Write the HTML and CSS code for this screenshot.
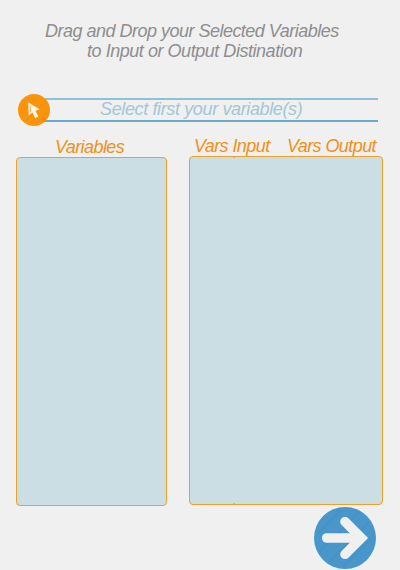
FILE: index.html
```html
<!DOCTYPE html>
<html lang="en">
<head>
<meta charset="utf-8">
<title>Variable selection</title>
<link rel="stylesheet" href="styles.css">
</head>
<body>
<main class="screen">
  <h1 class="title"><span class="title-first">Drag and Drop your Selected Variables</span><span class="title-second">to Input or Output Distination</span></h1>
  <div class="step">
    <svg class="step-icon" viewBox="0 0 32 32">
      <circle cx="16" cy="16" r="16" fill="#f8950d"/>
      <path d="M4 18 18 4M8 27 28 7M18 30 30 18" stroke="#e98c12" stroke-width="1.2" opacity=".45"/>
      <path d="M10.3 8.3 21.6 15.2 17.6 17 20.4 22.6 17.2 24.2 14.4 18.6 10.6 21.6Z" fill="#fff4e2"/>
      <path d="M12.3 12V18.4" stroke="#f8a63a" stroke-width="1"/>
    </svg>
    <div class="step-text"><span>Select first your variable(s)</span></div>
  </div>
  <div class="columns">
    <section class="source">
      <h2 class="label label-source">Variables</h2>
      <div class="panel"></div>
    </section>
    <section class="target">
      <div class="labels"><h2 class="label label-input">Vars Input</h2><h2 class="label label-output">Vars Output</h2></div>
      <div class="panel panel-split"></div>
    </section>
  </div>
  <button class="next" aria-label="Next">
    <svg viewBox="0 0 62 62">
      <circle cx="31" cy="31" r="31" fill="#4896ca"/>
      <path d="M3 27 27 3M5 45 46 4M15 55 55 15M29 60 61 28" stroke="#438dbf" stroke-width="1.3" opacity=".4"/>
      <path d="M12.7 31H44" fill="none" stroke="#f0f0f0" stroke-width="9.6" stroke-linecap="round"/>
      <path d="M31 14.7 47.3 31 31 47.3" fill="none" stroke="#f0f0f0" stroke-width="9.6" stroke-linecap="round"/>
    </svg>
  </button>
</main>
</body>
</html>
```
FILE: styles.css
```css
* { box-sizing: border-box; }
body { margin: 0; background: #f0f0f0; font-family: "Liberation Sans", Arial, sans-serif; font-style: italic; }
.screen { width: 400px; height: 570px; overflow: hidden; padding: 21px 17px 0 16px; display: flex; flex-direction: column; }
.title { margin: 0; height: 73px; display: flex; flex-direction: column; font-size: 18px; line-height: 20px; font-weight: 400; color: #8e8e8e; white-space: nowrap; }
.title-first { padding-left: 29px; letter-spacing: -0.51px; }
.title-second { padding-left: 71px; letter-spacing: -0.46px; }
.step { display: flex; height: 32px; padding: 0 5px 0 2px; align-items: center; }
.step-icon { width: 32px; height: 32px; flex: none; z-index: 1; }
.step-text { flex: 1; height: 24px; margin-left: -6px; border-top: 2px solid #8fc0d3; border-bottom: 2px solid #69acc7; padding-left: 56px; font-size: 18px; line-height: 18px; letter-spacing: -0.37px; color: #a5c6d6; white-space: nowrap; }
.columns { display: flex; gap: 22px; height: 380px; }
.source { width: 151px; padding-top: 11px; }
.target { width: 194px; padding-top: 10px; }
.label { margin: 0; height: 20px; font-size: 18px; line-height: 20px; letter-spacing: -0.58px; font-weight: 400; color: #f09018; white-space: nowrap; }
.label-source { padding-left: 39px; }
.labels { display: flex; }
.label-input { width: 98px; padding-left: 5px; }
.panel { height: 349px; border: 1px solid #f0a028; border-radius: 4px; background: #cbdee4; }
.panel-split { display: flex; flex-direction: column; justify-content: space-between; }
.panel-split::before, .panel-split::after { content: ""; width: 2px; height: 1px; margin-left: 43px; background: #e8b468; }
.next { width: 62px; height: 62px; flex: none; align-self: flex-end; margin: 1px 7px 0 0; padding: 0; border: 0; background: none; }
.next svg { display: block; width: 62px; height: 62px; }
```
